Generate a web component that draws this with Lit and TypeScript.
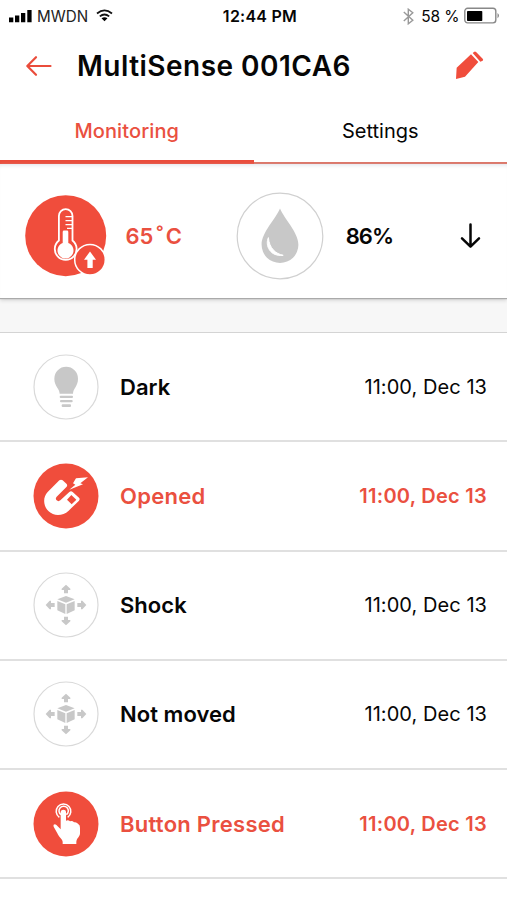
import { LitElement, html, css, svg } from "lit";
import { customElement, property } from "lit/decorators.js";
import { classMap } from "lit/directives/class-map.js";

type IconName = "bulb" | "magnet" | "cube" | "touch";

interface SensorEvent {
  icon: IconName;
  label: string;
  time: string;
  alert: boolean;
}

const EVENTS: SensorEvent[] = [
  { icon: "bulb", label: "Dark", time: "11:00, Dec 13", alert: false },
  { icon: "magnet", label: "Opened", time: "11:00, Dec 13", alert: true },
  { icon: "cube", label: "Shock", time: "11:00, Dec 13", alert: false },
  { icon: "cube", label: "Not moved", time: "11:00, Dec 13", alert: false },
  { icon: "touch", label: "Button Pressed", time: "11:00, Dec 13", alert: true },
];

// Glyphs share a 198-unit box centred on the origin.
const GLYPHS = {
  bulb: svg`
    <path d="M-19 20C-19 4-35-2-35-25A35.500 35.500 0 0 1 36-25C36-2 21 4 21 20Z"/>
    <rect x="-19" y="26" width="40" height="7" rx="3"/>
    <rect x="-18" y="39" width="38" height="7" rx="3"/>
    <rect x="-13" y="52" width="28" height="8" rx="3"/>`,
  magnet: svg`
    <path d="M-20-47Q-15-51-10-47L2-36Q5-32 2-28L-28 2Q-33 8-28 13Q-23 18-17 13L10-12Q15-17 20-12L39 5Q43 9 39 14L8 44C-10 61-37 61-52 46C-69 30-70 4-55-12Z"/>
    <path class="hole" d="M16-3L31 11L17 25L3 11Z"/>
    <path d="M30-53L66-56L43-38L51-35L10-19L28-34L21-38Z"/>`,
  cube: svg`
    <path d="M0-27L26-17L0-7L-26-17ZM-26-12L-2-2V27L-26 16ZM26-12L2-2V27L26 16Z"/>
    <path d="M0-61L13-49V-45H6V-35H-6V-45H-13V-49ZM0 61L13 49V45H6V35H-6V45H-13V49ZM-61 0L-49-13H-45V-6H-34V6H-45V13H-49ZM61 0L49-13H45V-6H34V6H45V13H49Z"/>`,
  touch: svg`
    <path class="ring" d="M-20-20A22 22 0 1 1 5-20M-15-28A14 14 0 1 1 1-28"/>
    <path d="M-16-37Q-15-43-8-43Q0-43 0-37V-10Q7-13 12-8Q19-11 24-5Q31-7 36-1Q43 3 42 12V28C42 38 32 43 31 53V60H-10V54C-10 46-22 39-26 28L-37 8Q-39 1-33 1Q-28 2-25 7L-16 16Z"/>`,
};

@customElement("sensor-icon")
export class SensorIcon extends LitElement {
  @property() name: IconName = "bulb";
  @property({ type: Boolean }) alert = false;

  static styles = css`
    :host { display: block; width: 66px; height: 66px; }
    svg { display: block; width: 66px; height: 66px; }
    .disc { fill: #fff; stroke: #d9d9d9; stroke-width: 3.5; }
    .glyph { fill: #c8c8c8; }
    .alert .disc { fill: #f04d3c; stroke: none; }
    .alert .glyph { fill: #fff; }
    .glyph .hole { fill: #f04d3c; stroke: none; }
    .ring { fill: none; stroke: #fff; stroke-width: 4.5; }
  `;

  render() {
    return html`<svg viewBox="-99 -99 198 198" class=${classMap({ alert: this.alert })}>
      <circle class="disc" r=${this.alert ? 97.5 : 96}></circle>
      <g class="glyph">${GLYPHS[this.name]}</g>
    </svg>`;
  }
}

@customElement("event-row")
export class EventRow extends LitElement {
  @property({ attribute: false }) event!: SensorEvent;

  static styles = css`
    :host { display: block; }
    .row {
      box-sizing: border-box;
      height: 109.25px;
      padding: 0 20px 0 32.7px;
      display: flex;
      align-items: center;
      border-bottom: 2px solid #e0e0e0;
      color: #060606;
      white-space: nowrap;
    }
    .label { margin-left: 21.3px; font-size: 22px; font-weight: 600; flex: 1; letter-spacing: 0.05px; }
    .time { font-size: 20px; letter-spacing: 0.06px; }
    .alert { color: #ea5040; }
    .alert .label { letter-spacing: 0.26px; }
    .alert .time { font-weight: 600; letter-spacing: 0.26px; }
  `;

  render() {
    const e = this.event;
    return html`<div class=${classMap({ row: true, alert: e.alert })}>
      <sensor-icon .name=${e.icon} .alert=${e.alert}></sensor-icon>
      <span class="label">${e.label}</span>
      <span class="time">${e.time}</span>
    </div>`;
  }
}

@customElement("app-root")
export class AppRoot extends LitElement {
  static styles = css`
    :host {
      display: block;
      height: 900px;
      overflow: hidden;
      background: #fff;
      color: #060606;
      font-family: Inter, "Liberation Sans", sans-serif;
      white-space: nowrap;
    }
    svg { display: block; flex: none; }
    .status { display: grid; grid-template-columns: 1fr auto 1fr; align-items: center; height: 32px; padding: 0 6px 0 9px; font-size: 16px; }
    .carrier, .power { display: flex; align-items: center; }
    .carrier { color: #222; }
    .network { margin: 0 7.5px 0 5px; font-size: 15.2px; }
    .clock { font-weight: 600; margin-left: 10px; letter-spacing: 0.25px; }
    .power { justify-content: flex-end; }
    .charge { margin: 0 4.5px 0 7px; font-size: 15.5px; letter-spacing: -0.1px; }
    .header { display: flex; align-items: center; height: 67px; padding: 0 23px 0 25px; }
    .title { margin: 0 0 0 24px; flex: 1; font-size: 28px; line-height: 34px; font-weight: 600; letter-spacing: 0.48px; }
    .tabs { display: flex; height: 65px; box-sizing: border-box; background: linear-gradient(#dd7466, #dd7466) bottom / 100% 2px no-repeat; }
    .tab { box-sizing: border-box; flex: 1; display: flex; justify-content: center; align-items: center; font-size: 20px; padding-top: 2px; border-bottom: 4px solid transparent; }
    .active { color: #ea5040; font-weight: 500; letter-spacing: 0.12px; border-color: #ea4c3b; }
    .panel {
      display: flex; align-items: center; box-sizing: border-box; height: 134px; padding: 9px 23px 0 24px;
      box-shadow: inset 0 4px 4px -3px #dfe1e8, 0 1px 1px #aaa, 0 2px 4px #ccc;
      position: relative;
      font-size: 22px; font-weight: 600;
    }
    .temp { width: 110.5px; margin-left: 17.5px; color: #ea5040; }
    .degree { margin: 0 2.2px 0 2.6px; }
    .humidity { flex: 1; margin-left: 21.7px; letter-spacing: -0.9px; }
    .gap { height: 35px; box-sizing: border-box; background: #f7f7f7; border-bottom: 1px solid #d4d4d4; }
  `;

  render() {
    return html`
      <div class="status">
        <div class="carrier">
          <svg width="23" height="14" viewBox="0 0 23 14"><path d="M0 8.500h4.300V13.300H0zM6 6.500h4.300v6.800H6zM12 4h4.300v9.300H12zM18.300 1h4.300v12.300h-4.300z"/></svg>
          <span class="network">MWDN</span>
          <svg width="17" height="15" viewBox="0 0 17 15"><path d="M1 4.500Q8.500-1.700 16 4.500M3.800 7.400Q8.500 3.700 13.200 7.400" fill="none" stroke="#111" stroke-width="1.800"/><path d="M5.500 9.300Q8.500 7.200 11.500 9.300L8.500 12.300Z"/></svg>
        </div>
        <span class="clock">12:44 PM</span>
        <div class="power">
          <svg width="11" height="17" viewBox="0 0 11 17"><path d="M.8 4L9.800 12.300L5.300 15.800V1.200L9.800 4.700L.8 13" fill="none" stroke="#999" stroke-width="1.400"/></svg>
          <span class="charge">58 %</span>
          <svg width="37" height="19" viewBox="0 0 37 19"><rect x=".8" y="1.300" width="31" height="14.600" rx="2.800" fill="#fff" stroke="#888" stroke-width="1.400"/><rect x="3" y="4" width="15.300" height="10" rx=".8"/><path d="M33.500 6Q36.500 8.600 33.500 11.200Z" fill="#888"/></svg>
        </div>
      </div>
      <div class="header">
        <svg width="28" height="22" viewBox="0 0 28 22"><path d="M25.500 11H3M11 2.200L2.300 11L11 19.800" fill="none" stroke="#ea4c3b" stroke-width="2.200" stroke-linecap="round" stroke-linejoin="round"/></svg>
        <h1 class="title">MultiSense 001CA6</h1>
        <svg width="29" height="29" viewBox="0 0 87 87"><path d="M3 84L5 50L48 10L70 33L30 77ZM53 6L57 3Q60 0 64 4L83 23Q86 26 83 29L76 32Z" fill="#f04d3c"/></svg>
      </div>
      <div class="tabs">
        <div class="tab active">Monitoring</div>
        <div class="tab">Settings</div>
      </div>
      <div class="panel">
        <svg width="84" height="84" viewBox="24 194 84 84">
          <circle cx="65.700" cy="235.700" r="40.500" fill="#f04d3c"/>
          <path d="M58.900 240.500V216a6.800 6.800 0 0 1 13.600 0V240.500A10.900 10.900 0 1 1 58.900 240.500Z" fill="none" stroke="#fff" stroke-width="1.800"/>
          <path d="M62.700 243V232Q62.700 230.600 64 230.600H67Q68.300 230.600 68.300 232V243A8 8 0 1 1 62.700 243Z" fill="#fff"/>
          <path d="M65.500 216.700H72M65.500 220.700H72M65.500 224.700H72M67 228.300H72" stroke="#fff" stroke-width="1.300"/>
          <circle cx="90" cy="259.700" r="15.300" fill="#f04d3c" stroke="#fff" stroke-width="1.500"/>
          <path d="M90 251.500L96 259.700H92.700V268H87.400V259.700H84Z" fill="#fff"/>
        </svg>
        <span class="temp">65<span class="degree">˚</span>C</span>
        <svg width="88" height="88" viewBox="236.300 191.700 88 88">
          <circle cx="280.300" cy="235.700" r="42.800" fill="#fff" stroke="#d0d0d0" stroke-width="1.200"/>
          <path d="M280.300 208.300C284 218 298.700 232 298.700 244.500A18.400 18.200 0 0 1 261.900 244.500C261.900 232 276.600 218 280.300 208.300Z" fill="#c8c8c8"/>
          <path d="M268.700 237.300C265 245 270.500 256.800 283.500 255C276 253.500 269.500 248 268.700 237.300Z" fill="#fff" stroke="#fff" stroke-width="1" stroke-linejoin="round"/>
        </svg>
        <span class="humidity">86%</span>
        <svg width="26" height="26" viewBox="0 0 26 26"><path d="M12.500 1.500V23.500M4 15.300L12.500 23.700L21 15.300" fill="none" stroke="#060606" stroke-width="2.500" stroke-linecap="round" stroke-linejoin="round"/></svg>
      </div>
      <div class="gap"></div>
      ${EVENTS.map((event) => html`<event-row .event=${event}></event-row>`)}
    `;
  }
}
